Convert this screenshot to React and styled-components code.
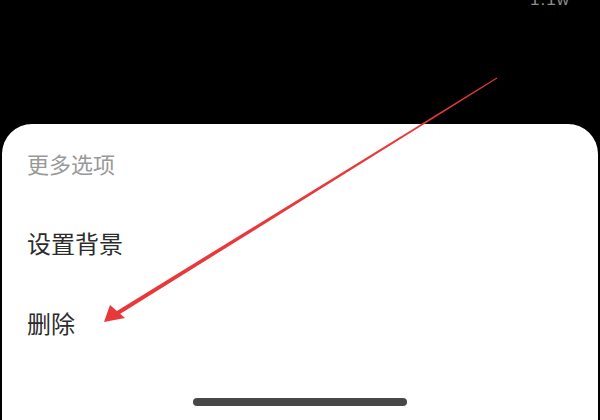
import styled, { createGlobalStyle } from "styled-components";

const GlobalStyle = createGlobalStyle`
	html, body {
		margin: 0;
		padding: 0;
		background: #000;
	}
	body {
		font-family: "Noto Sans CJK SC", "Noto Sans", sans-serif;
	}
`;

const Page = styled.div`
	position: relative;
	width: 600px;
	height: 420px;
	display: flex;
	flex-direction: column;
	overflow: hidden;
	background: #000;
`;

const TopArea = styled.div`
	height: 124px;
	flex-shrink: 0;
	display: flex;
	justify-content: flex-end;
	align-items: flex-start;
	padding-right: 30px;
	overflow: hidden;
`;

const Count = styled.span`
	margin-top: -10px;
	font-family: "Liberation Sans", Arial, sans-serif;
	font-size: 17px;
	line-height: 20px;
	color: #8c8c8c;
	letter-spacing: 1px;
`;

const Sheet = styled.div`
	flex: 1;
	margin: 0 2px;
	background: #fff;
	border-radius: 30px 30px 0 0;
	display: flex;
	flex-direction: column;
	padding: 0 25px;
`;

const Row = styled.div`
	height: ${(p) => (p.$title ? "78px" : "80px")};
	display: flex;
	align-items: center;
	font-size: ${(p) => (p.$title ? "22px" : "24px")};
	color: ${(p) => (p.$title ? "#999" : "#2c2c2c")};
`;

const HomeBar = styled.div`
	align-self: center;
	margin-top: 36px;
	width: 214px;
	height: 8px;
	border-radius: 4px;
	background: #474747;
`;

const Overlay = styled.svg`
	position: absolute;
	left: 0;
	top: 0;
	width: 600px;
	height: 420px;
	pointer-events: none;
`;

function Arrow() {
	const tail = [497, 78];
	const neck = [116, 314];
	const dx = neck[0] - tail[0];
	const dy = neck[1] - tail[1];
	const len = Math.hypot(dx, dy);
	const px = -dy / len;
	const py = dx / len;
	const w0 = 0.5;
	const w1 = 2.2;
	const shaft = [
		[tail[0] + px * w0, tail[1] + py * w0],
		[neck[0] + px * w1, neck[1] + py * w1],
		[neck[0] - px * w1, neck[1] - py * w1],
		[tail[0] - px * w0, tail[1] - py * w0],
	]
		.map((p) => p.join(","))
		.join(" ");
	return (
		<Overlay viewBox="0 0 600 420">
			<polygon points={shaft} fill="#e8383a" />
			<polygon points="104,322 110,305 125,318" fill="#e8383a" />
		</Overlay>
	);
}

export default function App() {
	return (
		<>
			<GlobalStyle />
			<Page>
				<TopArea>
					<Count>1.1w</Count>
				</TopArea>
				<Sheet>
					<Row $title>更多选项</Row>
					<Row>设置背景</Row>
					<Row>删除</Row>
					<HomeBar />
				</Sheet>
				<Arrow />
			</Page>
		</>
	);
}
